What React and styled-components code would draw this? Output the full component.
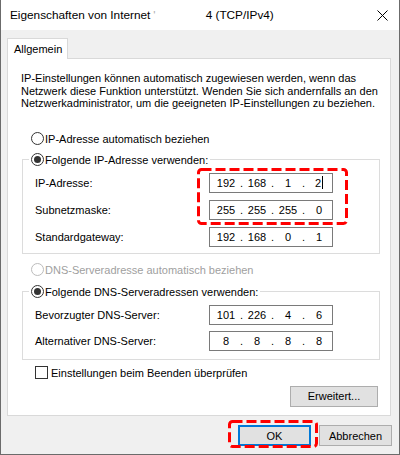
import React from "react"
import styled, { createGlobalStyle } from "styled-components"

const GlobalStyle = createGlobalStyle`
  html, body {
    margin: 0;
    padding: 0;
    background: #ffffff;
  }
  body {
    font-family: "Liberation Sans", Arial, sans-serif;
    font-size: 11px;
    color: #000;
  }
`

const Window = styled.div`
  width: 400px;
  height: 455px;
  box-sizing: border-box;
  border: 1px solid #6b6b6b;
  border-top: 0;
  background: #f0f0f0;
  display: flex;
  flex-direction: column;
`

const TitleBar = styled.div`
  height: 30px;
  flex: none;
  background: #fff;
  display: flex;
  align-items: center;
  padding: 0 10px 0 9px;
  font-size: 11.8px;
`

const Title = styled.div`
  flex: 1;
  white-space: nowrap;
`

const Tick = styled.span`
  color: #b0b0b0;
  margin-left: 3px;
`

const TitleRest = styled.span`
  margin-left: 50px;
`

const Close = styled.svg`
  width: 11px;
  height: 11px;
  margin-right: 1px;
`

const Body = styled.div`
  flex: 1;
  min-height: 0;
  display: flex;
  flex-direction: column;
  padding: 8px 8px 0 6px;
`

const Tabs = styled.div`
  display: flex;
`

const Tab = styled.div`
  position: relative;
  z-index: 1;
  height: 21px;
  box-sizing: border-box;
  margin-bottom: -1px;
  padding: 0 5px 1px 6px;
  line-height: 20px;
  background: #fff;
  border: 1px solid #d9d9d9;
  border-bottom: 0;
`

const Panel = styled.div`
  flex: 1;
  background: #fff;
  border: 1px solid #d9d9d9;
  display: flex;
  flex-direction: column;
  padding: 13px 10px 0 13px;
`

const Desc = styled.p`
  margin: 0;
  line-height: 12.5px;
  white-space: nowrap;
`

const RadioRow = styled.div`
  display: flex;
  align-items: center;
  gap: 1px;
  height: 14px;
  margin: ${p => p.$top || 0}px 0 0 ${p => p.$left || 0}px;
  color: ${p => (p.$disabled ? "#a0a0a0" : "#000")};
  white-space: nowrap;
`

const Radio = styled.span`
  width: 13px;
  height: 13px;
  box-sizing: border-box;
  border-radius: 50%;
  border: 1px solid ${p => (p.$disabled ? "#bcbcbc" : "#333")};
  background: #fff;
  display: flex;
  align-items: center;
  justify-content: center;
  &::after {
    content: "";
    display: ${p => (p.$checked ? "block" : "none")};
    width: 7px;
    height: 7px;
    border-radius: 50%;
    background: #333;
  }
`

const GroupBox = styled.fieldset`
  margin: ${p => p.$top}px 0 0 1px;
  padding: 0;
  min-width: 0;
  border: 1px solid #dcdcdc;
`

const Legend = styled.legend`
  margin-left: 6px;
  padding: 0 2px;
`

const Rows = styled.div`
  position: relative;
  display: flex;
  flex-direction: column;
  gap: ${p => p.$gap}px;
  padding: ${p => p.$top}px 0 ${p => p.$bottom}px 12px;
`

const Row = styled.div`
  display: flex;
  align-items: center;
  height: 20px;
`

const Label = styled.span`
  width: 174px;
  white-space: nowrap;
`

const IpBox = styled.div`
  width: 124px;
  height: 20px;
  box-sizing: border-box;
  border: 1px solid #7a7a7a;
  background: #fff;
  display: flex;
  align-items: center;
  padding-left: 3px;
`

const Octet = styled.span`
  width: 26px;
  text-align: center;
  white-space: nowrap;
`

const Dot = styled.span`
  width: 5px;
  text-align: center;
`

const Caret = styled.span`
  display: inline-block;
  width: 1px;
  height: 13px;
  margin-left: 1px;
  vertical-align: -2px;
  background: #000;
`

const CheckRow = styled.label`
  display: flex;
  align-items: center;
  gap: 3px;
  height: 14px;
  margin: 6px 0 0 14px;
  white-space: nowrap;
`

const CheckBox = styled.span`
  width: 13px;
  height: 13px;
  box-sizing: border-box;
  border: 1px solid #333;
  background: #fff;
`

const Button = styled.button`
  width: ${p => p.$width || 73}px;
  height: 21px;
  box-sizing: border-box;
  margin: 0;
  padding: 0;
  font: inherit;
  color: #000;
  background: #e1e1e1;
  border: ${p => (p.$primary ? "2px solid #0078d7" : "1px solid #adadad")};
`

const AdvancedButton = styled(Button)`
  align-self: flex-end;
  margin: 6px 2px 0 0;
`

const Footer = styled.div`
  flex: none;
  display: flex;
  justify-content: flex-end;
  gap: 8px;
  padding: 9px 0 8px;
  margin-right: -1px;
`

const Marked = styled.span`
  position: relative;
  display: inline-flex;
`

const Annotation = styled.svg`
  position: absolute;
  left: ${p => p.$left}px;
  top: ${p => p.$top}px;
  pointer-events: none;
  overflow: visible;
`

const DashedBox = ({ left, top, width, height }) => (
  <Annotation $left={left} $top={top} width={width} height={height}>
    <rect
      x="1.5"
      y="1.5"
      width={width - 3}
      height={height - 3}
      rx="3"
      fill="none"
      stroke="#ff0000"
      strokeWidth="3"
      strokeDasharray="10 4"
    />
  </Annotation>
)

const IpField = ({ value, caret }) => {
  const parts = value.split(".")
  return (
    <IpBox>
      {parts.map((part, i) => (
        <React.Fragment key={i}>
          <Octet>
            {part}
            {caret && i === 3 && <Caret />}
          </Octet>
          {i < 3 && <Dot>.</Dot>}
        </React.Fragment>
      ))}
    </IpBox>
  )
}

const App = () => {
  return (
    <Window>
      <GlobalStyle />
      <TitleBar>
        <Title>
          Eigenschaften von Internet<Tick>'</Tick>
          <TitleRest>4 (TCP/IPv4)</TitleRest>
        </Title>
        <Close viewBox="0 0 11 11">
          <path d="M0.5 0.5 L10.5 10.5 M10.5 0.5 L0.5 10.5" stroke="#000" strokeWidth="1" />
        </Close>
      </TitleBar>
      <Body>
        <Tabs>
          <Tab>Allgemein</Tab>
        </Tabs>
        <Panel>
          <Desc>
            IP-Einstellungen können automatisch zugewiesen werden, wenn das
            <br />
            Netzwerk diese Funktion unterstützt. Wenden Sie sich andernfalls an den
            <br />
            Netzwerkadministrator, um die geeigneten IP-Einstellungen zu beziehen.
          </Desc>

          <RadioRow $top={22} $left={10}>
            <Radio />
            IP-Adresse automatisch beziehen
          </RadioRow>

          <GroupBox $top={7}>
            <Legend>
              <RadioRow>
                <Radio $checked />
                Folgende IP-Adresse verwenden:
              </RadioRow>
            </Legend>
            <Rows $top={6} $bottom={6} $gap={7}>
              <Row>
                <Label>IP-Adresse:</Label>
                <IpField value="192.168.1.2" caret />
              </Row>
              <Row>
                <Label>Subnetzmaske:</Label>
                <IpField value="255.255.255.0" />
              </Row>
              <Row>
                <Label>Standardgateway:</Label>
                <IpField value="192.168.0.1" />
              </Row>
              <DashedBox left={174} top={1} width={151} height={57} />
            </Rows>
          </GroupBox>

          <RadioRow $top={9} $left={10} $disabled>
            <Radio $disabled />
            DNS-Serveradresse automatisch beziehen
          </RadioRow>

          <GroupBox $top={8}>
            <Legend>
              <RadioRow>
                <Radio $checked />
                Folgende DNS-Serveradressen verwenden:
              </RadioRow>
            </Legend>
            <Rows $top={6} $bottom={8} $gap={6}>
              <Row>
                <Label>Bevorzugter DNS-Server:</Label>
                <IpField value="101.226.4.6" />
              </Row>
              <Row>
                <Label>Alternativer DNS-Server:</Label>
                <IpField value="8.8.8.8" />
              </Row>
            </Rows>
          </GroupBox>

          <CheckRow>
            <CheckBox />
            Einstellungen beim Beenden überprüfen
          </CheckRow>

          <AdvancedButton $width={88}>Erweitert...</AdvancedButton>
        </Panel>
        <Footer>
          <Marked>
            <Button $primary>OK</Button>
            <DashedBox left={-10} top={-5} width={90} height={28} />
          </Marked>
          <Button>Abbrechen</Button>
        </Footer>
      </Body>
    </Window>
  )
}

export default App
